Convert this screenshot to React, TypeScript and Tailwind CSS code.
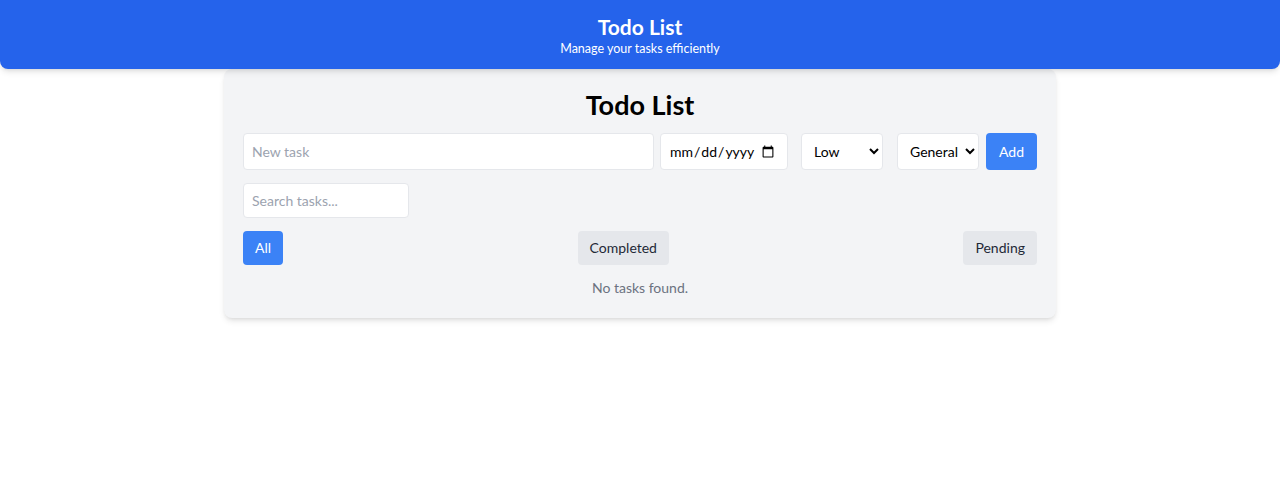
import { useState } from 'react'

type Filter = 'all' | 'completed' | 'pending'

export default function App() {
  const [text, setText] = useState('')
  const [date, setDate] = useState('')
  const [priority, setPriority] = useState('Low')
  const [category, setCategory] = useState('General')
  const [search, setSearch] = useState('')
  const [filter, setFilter] = useState<Filter>('all')

  const btn = (f: Filter) =>
    filter === f ? 'bg-[#3b82f6] text-white' : 'bg-[#e5e7eb] text-[#1f2937]'

  return (
    <div className="min-h-screen bg-white text-black" style={{ fontFamily: '"Segoe UI", Lato, sans-serif' }}>
      {/* Header */}
      <header className="relative z-10 bg-[#2563eb] text-white text-center pt-[13px] pb-3 rounded-b-lg shadow-md">
        <h1 className="text-[21px] font-bold leading-7">Todo List</h1>
        <p className="text-[12.5px] leading-4">Manage your tasks efficiently</p>
      </header>

      {/* Card */}
      <div className="w-[832px] mx-auto bg-[#f3f4f6] rounded-lg shadow-md px-[19px] py-5">
        <h2 className="text-[27px] font-bold text-center leading-8 mb-3">Todo List</h2>

        <div className="flex items-center">
          <input value={text} onChange={e => setText(e.target.value)} placeholder="New task"
            className="flex-1 h-[37px] px-2 text-sm bg-white border border-[#e5e7eb] rounded placeholder:text-[#9ca3af] outline-none" />
          <input type="date" value={date} onChange={e => setDate(e.target.value)}
            className="ml-[6px] w-[128px] h-[37px] pl-2 pr-2.5 text-sm bg-white border border-[#e5e7eb] rounded outline-none" />
          <select value={priority} onChange={e => setPriority(e.target.value)}
            className="ml-[13px] w-[82px] h-[37px] pl-2 pr-1 text-sm bg-white border border-[#e5e7eb] rounded outline-none">
            <option>Low</option>
            <option>Medium</option>
            <option>High</option>
          </select>
          <select value={category} onChange={e => setCategory(e.target.value)}
            className="ml-[14px] w-[82px] h-[37px] pl-2 pr-1 text-sm bg-white border border-[#e5e7eb] rounded outline-none">
            <option>General</option>
            <option>Work</option>
            <option>Personal</option>
          </select>
          <button className="ml-[7px] w-[51px] h-[37px] text-sm bg-[#3b82f6] text-white rounded">Add</button>
        </div>

        <input value={search} onChange={e => setSearch(e.target.value)} placeholder="Search tasks..."
          className="block mt-[13px] w-[166px] h-[35px] px-2 text-sm bg-white border border-[#e5e7eb] rounded placeholder:text-[#9ca3af] outline-none" />

        <div className="flex justify-between mt-[13px]">
          <button onClick={() => setFilter('all')} className={`h-[34px] px-3 text-sm rounded ${btn('all')}`}>All</button>
          <button onClick={() => setFilter('completed')} className={`h-[34px] px-3 text-sm rounded ${btn('completed')}`}>Completed</button>
          <button onClick={() => setFilter('pending')} className={`h-[34px] px-3 text-sm rounded ${btn('pending')}`}>Pending</button>
        </div>

        <p className="text-center text-sm leading-5 text-[#6b7280] mt-[13px]">No tasks found.</p>
      </div>
    </div>
  )
}
